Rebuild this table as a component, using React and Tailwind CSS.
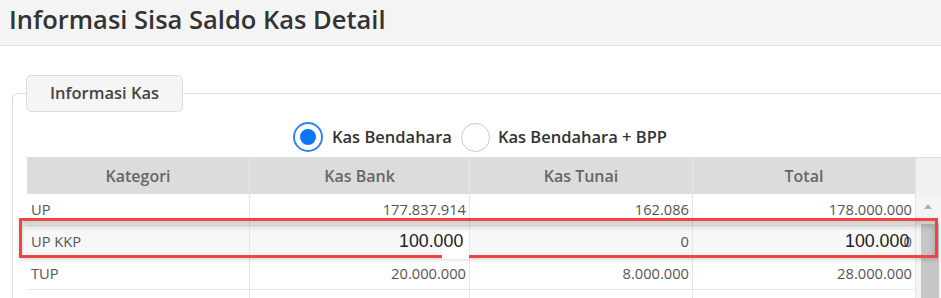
import React from "react";

const rows = [
  { k: "UP", bank: "177.837.914", tunai: "162.086", total: "178.000.000" },
  { k: "UP KKP", bank: "100.000", tunai: "0", total: "100.000" },
  { k: "TUP", bank: "20.000.000", tunai: "8.000.000", total: "28.000.000" },
  { k: "", bank: "", tunai: "", total: "" },
];

export default function App() {
  return (
    <div
      className="relative w-[941px] h-[298px] overflow-hidden bg-white"
      style={{ fontFamily: '"Open Sans", "Noto Sans", sans-serif' }}
    >
      {/* Header */}
      <div className="h-[46px] bg-[#f4f4f4] border-b border-[#e2e2e2] flex items-center pl-[9px]">
        <h1 className="text-[25.5px] leading-[30px] mt-[-8px] font-semibold text-[#333]">
          Informasi Sisa Saldo Kas Detail
        </h1>
      </div>

      {/* Fieldset */}
      <div className="pl-[12px] pt-[47px]">
        <div className="relative border-t border-l border-[#dedede] rounded-tl-[6px] pl-[14px] pt-[27px]">
          {/* legend */}
          <div className="absolute left-[13px] top-[-19px] w-[157px] h-[37px] bg-[#f5f5f5] border border-[#dcdcdc] rounded-[5px] flex items-center justify-center">
            <span className="text-[16.5px] font-semibold text-[#444]">Informasi Kas</span>
          </div>

          {/* radios */}
          <div className="h-[32px] flex items-center pl-[266px] mb-[4px]">
            <div className="w-[30px] h-[30px] rounded-full border-[2px] border-[#2f86f0] flex items-center justify-center">
              <div className="w-[16px] h-[16px] rounded-full bg-[#0a78f5]" />
            </div>
            <span className="ml-[9px] text-[16.5px] font-semibold text-[#333]">Kas Bendahara</span>
            <div className="ml-[9px] w-[29px] h-[29px] rounded-full border border-[#c8c8c8]" />
            <span className="ml-[8px] text-[16.5px] font-semibold text-[#333]">Kas Bendahara + BPP</span>
          </div>

          {/* table */}
          <div className="w-[914px]">
            <div className="grid grid-cols-[223px_220px_223px_222px_26px] h-[37px] bg-[#dcdcdc] text-[16px] font-semibold text-[#666]">
              <div className="flex items-center justify-center border-r border-[#e8e8e8]">Kategori</div>
              <div className="flex items-center justify-center border-r border-[#e8e8e8]">Kas Bank</div>
              <div className="flex items-center justify-center border-r border-[#e8e8e8]">Kas Tunai</div>
              <div className="flex items-center justify-center">Total</div>
              <div className="bg-[#f1f1f1] border-l border-[#e4e4e4] mt-[1px]" />
            </div>
            <div className="flex">
              <div className="w-[888px]">
                {rows.map((r, i) => (
                  <div
                    key={i}
                    className={
                      "grid grid-cols-[223px_220px_223px_222px] h-[32px] border-b border-[#e6e6e6] text-[14.7px] text-[#555] " +
                      (i === 1 ? "bg-[#f7f7f7]" : "bg-white")
                    }
                  >
                    <div className="flex items-center pl-[4px] border-r border-[#e6e6e6]">{r.k}</div>
                    <div className="flex items-center justify-end pr-[3px] border-r border-[#e6e6e6]">
                      {i === 1 ? "" : r.bank}
                    </div>
                    <div className="flex items-center justify-end pr-[3px] border-r border-[#e6e6e6]">{r.tunai}</div>
                    <div className="flex items-center justify-end pr-[3px]">{r.total}</div>
                  </div>
                ))}
              </div>
              <div className="relative w-[26px] bg-[#f4f4f4] border-l border-[#e4e4e4]">
                <div className="absolute left-[8px] top-[10px] w-0 h-0 border-l-[4px] border-r-[4px] border-b-[5px] border-l-transparent border-r-transparent border-b-[#b0b0b0]" />
                <div className="absolute left-[5px] right-[2px] top-[30px] bottom-0 bg-[#c6c6c6]" />
              </div>
            </div>
          </div>
        </div>
      </div>

      {/* Red highlight box */}
      <div className="absolute left-[19px] top-[218px] w-[919px] h-[40px] border-[3px] border-[#f04545] shadow-[inset_0_5px_6px_rgba(0,0,0,0.2),0_2px_4px_rgba(0,0,0,0.15)] pointer-events-none" />

      {/* pasted value overlays */}
      <div className="absolute left-[442px] top-[231px] w-[27px] h-[28px] bg-white" />
      <div
        className="absolute left-[399px] top-[229px] text-[17.8px] text-[#222] leading-[24px]"
        style={{ fontFamily: '"Liberation Sans", Arial, sans-serif' }}
      >
        100.000
      </div>
      <div className="absolute left-[836px] top-[230px] w-[68px] h-[24px] bg-[#f7f7f7]" />
      <div
        className="absolute left-[845px] top-[229px] text-[17.8px] text-[#222] leading-[24px]"
        style={{ fontFamily: '"Liberation Sans", Arial, sans-serif' }}
      >
        100.000
      </div>
    </div>
  );
}
